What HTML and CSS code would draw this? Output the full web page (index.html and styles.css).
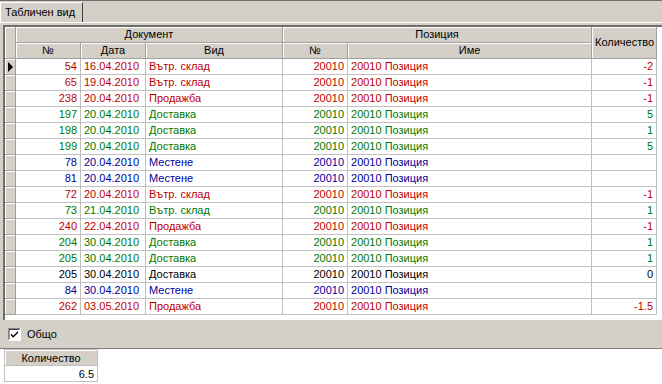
FILE: index.html
```html
<!DOCTYPE html>
<html lang="bg">
<head>
  <meta charset="UTF-8" />
  <title>Табличен вид</title>
  <link rel="stylesheet" href="styles.css">
</head>
<body>
  <div class="tabbar">
    <div class="tab">Табличен вид</div>
  </div>

  <div class="page">
    <div class="grid">
      <table class="data">
        <colgroup>
          <col class="c-ind"><col class="c-num"><col class="c-num"><col class="c-kind">
          <col class="c-num"><col class="c-name"><col class="c-num"><col class="c-rest">
        </colgroup>
        <thead>
          <tr>
            <th rowspan="2" class="ind"></th>
            <th colspan="3">Документ</th>
            <th colspan="2">Позиция</th>
            <th rowspan="2">Количество</th>
            <th rowspan="2" class="rest"></th>
          </tr>
          <tr>
            <th>№</th><th>Дата</th><th>Вид</th><th>№</th><th>Име</th>
          </tr>
        </thead>
        <tbody>
          <tr class="red"><td class="ind"><span class="arrow"></span></td><td class="r">54</td><td>16.04.2010</td><td>Вътр. склад</td><td class="r">20010</td><td>20010 Позиция</td><td class="r">-2</td><td class="rest"></td></tr>
          <tr class="red"><td class="ind"></td><td class="r">65</td><td>19.04.2010</td><td>Вътр. склад</td><td class="r">20010</td><td>20010 Позиция</td><td class="r">-1</td><td class="rest"></td></tr>
          <tr class="red"><td class="ind"></td><td class="r">238</td><td>20.04.2010</td><td>Продажба</td><td class="r">20010</td><td>20010 Позиция</td><td class="r">-1</td><td class="rest"></td></tr>
          <tr class="green"><td class="ind"></td><td class="r">197</td><td>20.04.2010</td><td>Доставка</td><td class="r">20010</td><td>20010 Позиция</td><td class="r">5</td><td class="rest"></td></tr>
          <tr class="green"><td class="ind"></td><td class="r">198</td><td>20.04.2010</td><td>Доставка</td><td class="r">20010</td><td>20010 Позиция</td><td class="r">1</td><td class="rest"></td></tr>
          <tr class="green"><td class="ind"></td><td class="r">199</td><td>20.04.2010</td><td>Доставка</td><td class="r">20010</td><td>20010 Позиция</td><td class="r">5</td><td class="rest"></td></tr>
          <tr class="blue"><td class="ind"></td><td class="r">78</td><td>20.04.2010</td><td>Местене</td><td class="r">20010</td><td>20010 Позиция</td><td class="r"></td><td class="rest"></td></tr>
          <tr class="blue"><td class="ind"></td><td class="r">81</td><td>20.04.2010</td><td>Местене</td><td class="r">20010</td><td>20010 Позиция</td><td class="r"></td><td class="rest"></td></tr>
          <tr class="red"><td class="ind"></td><td class="r">72</td><td>20.04.2010</td><td>Вътр. склад</td><td class="r">20010</td><td>20010 Позиция</td><td class="r">-1</td><td class="rest"></td></tr>
          <tr class="green"><td class="ind"></td><td class="r">73</td><td>21.04.2010</td><td>Вътр. склад</td><td class="r">20010</td><td>20010 Позиция</td><td class="r">1</td><td class="rest"></td></tr>
          <tr class="red"><td class="ind"></td><td class="r">240</td><td>22.04.2010</td><td>Продажба</td><td class="r">20010</td><td>20010 Позиция</td><td class="r">-1</td><td class="rest"></td></tr>
          <tr class="green"><td class="ind"></td><td class="r">204</td><td>30.04.2010</td><td>Доставка</td><td class="r">20010</td><td>20010 Позиция</td><td class="r">1</td><td class="rest"></td></tr>
          <tr class="green"><td class="ind"></td><td class="r">205</td><td>30.04.2010</td><td>Доставка</td><td class="r">20010</td><td>20010 Позиция</td><td class="r">1</td><td class="rest"></td></tr>
          <tr class="black"><td class="ind"></td><td class="r">205</td><td>30.04.2010</td><td>Доставка</td><td class="r">20010</td><td>20010 Позиция</td><td class="r">0</td><td class="rest"></td></tr>
          <tr class="blue"><td class="ind"></td><td class="r">84</td><td>30.04.2010</td><td>Местене</td><td class="r">20010</td><td>20010 Позиция</td><td class="r"></td><td class="rest"></td></tr>
          <tr class="red"><td class="ind"></td><td class="r">262</td><td>03.05.2010</td><td>Продажба</td><td class="r">20010</td><td>20010 Позиция</td><td class="r">-1.5</td><td class="rest"></td></tr>
        </tbody>
      </table>
    </div>

    <div class="totals-bar">
      <label class="check">
        <svg width="13" height="13" viewBox="0 0 13 13">
          <rect x="0" y="0" width="13" height="13" fill="#ffffff"/>
          <path d="M0 12.5V0.5H12.5" fill="none" stroke="#808080"/>
          <path d="M1 11.5V1.5H11.5" fill="none" stroke="#404040"/>
          <path d="M0.5 13V12.5H12.5V0" fill="none" stroke="#ffffff"/>
          <path d="M3 5.5L5.2 7.7L10 2.9V5L5.2 9.8L3 7.6Z" fill="#000000"/>
        </svg>
        <span>Общо</span>
      </label>
    </div>
  </div>

  <div class="summary">
    <table class="sum">
      <tr><th>Количество</th></tr>
      <tr><td>6.5</td></tr>
    </table>
  </div>
</body>
</html>
```

FILE: styles.css
```css
body {
  margin: 0;
  background: #ffffff;
  font-family: 'Liberation Sans', Arial, sans-serif;
  font-size: 11px;
  color: #000000;
  width: 662px;
  overflow: hidden;
}
.tabbar {
  height: 21px;
  border-top: 1px solid #6e6e6e;
  background: #d4d0c8;
  display: flex;
  align-items: flex-end;
}
.tab {
  width: 77px;
  height: 19px;
  padding-left: 4px;
  line-height: 19px;
  border-left: 1px solid #ffffff;
  border-top: 1px solid #ffffff;
  border-right: 1px solid #404040;
  background: #d4d0c8;
}
.page {
  background: #d4d0c8;
  border-top: 1px solid #ffffff;
  padding: 2px 0 0 3px;
  border-bottom: 1px solid #808080;
}
.grid {
  height: 293px;
  background: #ffffff;
  border-top: 2px solid #6e6e6e;
  border-left: 2px solid #6e6e6e;
  overflow: hidden;
}
.data {
  border-collapse: separate;
  border-spacing: 0;
  table-layout: fixed;
  width: 680px;
}
.c-ind { width: 11px; }
.c-num { width: 65px; }
.c-kind { width: 137px; }
.c-name { width: 244px; }
.c-rest { width: 28px; }
.data th, .data td {
  box-sizing: border-box;
  height: 16px;
  padding: 0 3px;
  border-right: 1px solid #c0c0c0;
  border-bottom: 1px solid #c0c0c0;
  white-space: nowrap;
  overflow: hidden;
  line-height: 15px;
  text-align: left;
  font-weight: normal;
}
.data th {
  background: #d4d0c8;
  text-align: center;
  border-right-color: #a0a0a0;
  border-bottom-color: #a0a0a0;
  box-shadow: inset 1px 1px #ffffff;
}
.data th.rest, .data td.rest {
  background: #ffffff;
  box-shadow: none;
  border: none;
}
.data td.ind {
  background: #d4d0c8;
  border-right-color: #a0a0a0;
  border-bottom-color: #a0a0a0;
  box-shadow: inset 1px 1px #ffffff;
  padding: 0;
  position: relative;
}
.data td.r { text-align: right; }
.arrow {
  position: absolute;
  left: 3px;
  top: 3px;
  border-top: 5px solid transparent;
  border-bottom: 5px solid transparent;
  border-left: 5px solid #000000;
}
.red td { color: #c00000; }
.green td { color: #007800; }
.blue td { color: #000099; }
.black td { color: #000000; }
.totals-bar {
  height: 28px;
  display: flex;
  align-items: center;
  padding-left: 5px;
}
.check {
  display: flex;
  align-items: center;
  gap: 6px;
}
.check svg { display: block; }
.summary {
  padding-left: 4px;
}
.sum {
  border-collapse: collapse;
  width: 94px;
}
.sum th, .sum td {
  box-sizing: border-box;
  height: 16px;
  padding: 0 3px;
  border: 1px solid #c0c0c0;
  font-weight: normal;
  line-height: 14px;
}
.sum th {
  background: #d4d0c8;
  text-align: center;
  box-shadow: inset 1px 1px #ffffff;
}
.sum td {
  text-align: right;
}
```
